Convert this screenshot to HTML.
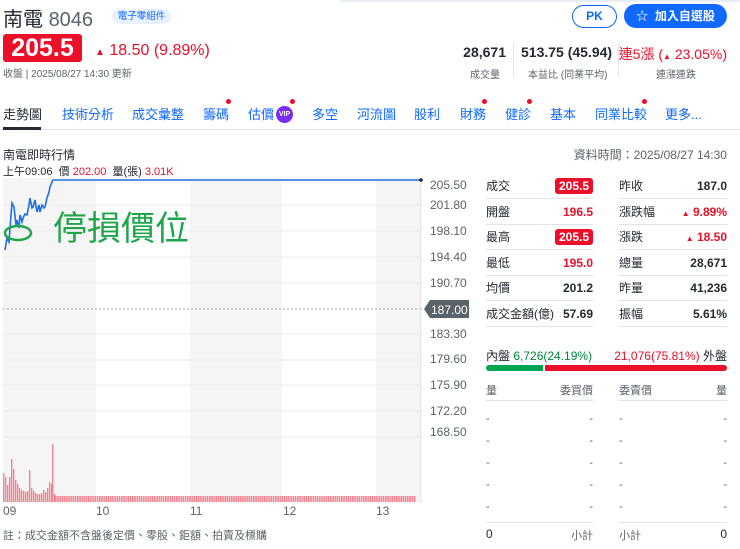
<!DOCTYPE html>
<html><head><meta charset="utf-8"><style>
*{margin:0;padding:0;box-sizing:border-box}
body{width:740px;height:549px;background:#fff;font-family:"Liberation Sans","Noto Sans CJK TC",sans-serif;position:relative;overflow:hidden;color:#232a31}
.a{position:absolute;white-space:nowrap}
.red{color:#eb0f29}.grn{color:#00873c}
.tab{position:absolute;top:104px;font-size:13px;color:#0f69ff}
.dot{position:absolute;width:5px;height:5px;border-radius:50%;background:#eb0f29}
.lbl{position:absolute;left:430px;font-size:12px;color:#5b636a}
.row{position:absolute;height:26px;border-bottom:1px solid #e0e4e9;font-size:12px;display:flex;justify-content:space-between;align-items:center}
.row b{font-weight:bold}
.box{background:#eb0f29;color:#fff;border-radius:3px;padding:1px 4px;font-weight:bold}
.ob{position:absolute;font-size:11px;color:#5b636a}
</style></head><body>
<div class="a" style="left:340px;top:0;width:400px;height:2px;background:#e8edf3"></div>
<div class="a" style="left:3px;top:3px;font-size:20px;color:#232a31">南電 <span style="color:#5b636a">8046</span></div>
<div class="a" style="left:112px;top:9px;width:59px;height:15px;background:#e8f1ff;border-radius:8px;font-size:9.5px;color:#0f69ff;text-align:center;line-height:15px">電子零組件</div>
<div class="a" style="left:3px;top:34px;width:79px;height:28px;background:#eb0f29;border-radius:3px;color:#fff;font-size:25px;font-weight:bold;text-align:center;line-height:28px">205.5</div>
<div class="a red" style="left:95px;top:42px;font-size:16px"><span style="font-size:10px">▲</span> 18.50 (9.89%)</div>
<div class="a" style="left:3px;top:65px;font-size:10px;color:#5b636a">收盤 | 2025/08/27 14:30 更新</div>

<div class="a" style="left:572px;top:5px;width:45px;height:23px;border:1.5px solid #0f69ff;border-radius:12px;color:#0f69ff;font-size:12px;font-weight:bold;text-align:center;line-height:20px">PK</div>
<div class="a" style="left:624px;top:4px;width:103px;height:24px;background:#0f69ff;border-radius:12px;color:#fff;font-size:12px;font-weight:bold;text-align:center;line-height:24px">☆&nbsp; 加入自選股</div>

<div class="a" style="right:234px;top:44px;font-size:14px;font-weight:bold">28,671</div>
<div class="a" style="right:240px;top:66px;font-size:10px;color:#5b636a">成交量</div>
<div class="a" style="left:513px;top:44px;width:1px;height:33px;background:#e0e4e9"></div>
<div class="a" style="left:521px;top:44px;font-size:14px;font-weight:bold">513.75 (45.94)</div>
<div class="a" style="left:528px;top:66px;font-size:10px;color:#5b636a">本益比 (同業平均)</div>
<div class="a" style="left:618px;top:44px;width:1px;height:33px;background:#e0e4e9"></div>
<div class="a red" style="right:13px;top:44px;font-size:14px">連5漲 (<span style="font-size:8px">▲</span> 23.05%)</div>
<div class="a" style="left:656px;top:66px;font-size:10px;color:#5b636a">連漲連跌</div>

<div class="a" style="left:0;top:129px;width:740px;height:1px;background:#e0e4e9"></div>
<div class="a" style="left:3px;top:127px;width:38px;height:3px;background:#232a31"></div>
<div class="tab" style="left:3px;color:#232a31">走勢圖</div>
<div class="tab" style="left:62px">技術分析</div>
<div class="tab" style="left:132px">成交彙整</div>
<div class="tab" style="left:203px">籌碼</div><div class="dot" style="left:226px;top:99px"></div>
<div class="tab" style="left:248px">估價</div>
<div class="a" style="left:276px;top:106px;width:17px;height:17px;border-radius:50%;background:#7a2cf0;color:#fff;font-size:7px;font-weight:bold;text-align:center;line-height:17px">VIP</div><div class="dot" style="left:290px;top:99px"></div>
<div class="tab" style="left:312px">多空</div>
<div class="tab" style="left:357px">河流圖</div>
<div class="tab" style="left:414px">股利</div>
<div class="tab" style="left:460px">財務</div><div class="dot" style="left:482px;top:99px"></div>
<div class="tab" style="left:505px">健診</div><div class="dot" style="left:527px;top:99px"></div>
<div class="tab" style="left:550px">基本</div>
<div class="tab" style="left:595px">同業比較</div><div class="dot" style="left:642px;top:99px"></div>
<div class="tab" style="left:665px">更多...</div>

<div class="a" style="left:3px;top:146px;font-size:12px">南電即時行情</div>
<div class="a" style="left:3px;top:163px;font-size:11px;color:#232a31">上午09:06 &nbsp;價 <span class="red">202.00</span> &nbsp;量(張) <span class="red">3.01K</span></div>
<div class="a" style="right:13px;top:146px;font-size:12px;color:#5b636a">資料時間：2025/08/27 14:30</div>

<svg class="a" style="left:0;top:175px" width="480" height="345" viewBox="0 175 480 345">
<rect x="3" y="178" width="93" height="325" fill="#f5f5f5"/>
<rect x="190" y="178" width="92" height="325" fill="#f5f5f5"/>
<rect x="376" y="178" width="45" height="325" fill="#f5f5f5"/>
<line x1="421" y1="178" x2="421" y2="503" stroke="#e0e0e0"/>
<g stroke="#ebebeb">
<line x1="3" y1="205" x2="421" y2="205"/><line x1="3" y1="231" x2="421" y2="231"/><line x1="3" y1="257" x2="421" y2="257"/><line x1="3" y1="283" x2="421" y2="283"/><line x1="3" y1="334" x2="421" y2="334"/><line x1="3" y1="360" x2="421" y2="360"/><line x1="3" y1="385" x2="421" y2="385"/><line x1="3" y1="411" x2="421" y2="411"/><line x1="3" y1="437" x2="421" y2="437"/>
</g>
<line x1="3" y1="309" x2="421" y2="309" stroke="#aaa" stroke-dasharray="2,2"/>
<polyline fill="none" stroke="#1e6fe0" stroke-width="1.6" points="5,250 7,238 9,242 11,215 12,203 14,207 16,225 17,220 19,228 20,215 22,222 23,218 25,214 27,215 29,205 30,198 32,208 33,207 35,200 37,212 39,205 40,212 42,205 44,208 45,207 47,198 49,192 50,187 52,182 53,180 420,180"/>
<circle cx="421" cy="180" r="1.8" fill="#222"/>
<ellipse cx="18" cy="233" rx="13" ry="7" fill="none" stroke="#1fa64a" stroke-width="2.5"/>
<path d="M424 309 L430 300 H469 V318 H430 Z" fill="#5b636a"/>
<text x="431" y="314" font-size="12" fill="#fff" font-family="Liberation Sans">187.00</text>
<defs><pattern id="p" width="2.2" height="10" patternUnits="userSpaceOnUse"><rect width="1.6" height="10" fill="#f2838f"/></pattern></defs>
<rect x="55" y="496" width="361" height="6" fill="url(#p)"/>
<g fill="#f2838f">
<rect x="3" y="473" width="1.4" height="29"/><rect x="5" y="477" width="1.4" height="25"/><rect x="7" y="485" width="1.4" height="17"/><rect x="9" y="477" width="1.4" height="25"/><rect x="11" y="459" width="1.4" height="43"/><rect x="13" y="469" width="1.4" height="33"/><rect x="15" y="480" width="1.4" height="22"/><rect x="17" y="484" width="1.4" height="18"/><rect x="19" y="488" width="1.4" height="14"/><rect x="21" y="490" width="1.4" height="12"/><rect x="23" y="491" width="1.4" height="11"/><rect x="25" y="492" width="1.4" height="10"/><rect x="27" y="491" width="1.4" height="11"/><rect x="29" y="470" width="1.4" height="32"/><rect x="31" y="488" width="1.4" height="14"/><rect x="33" y="491" width="1.4" height="11"/><rect x="35" y="493" width="1.4" height="9"/><rect x="37" y="494" width="1.4" height="8"/><rect x="39" y="494" width="1.4" height="8"/><rect x="41" y="493" width="1.4" height="9"/><rect x="43" y="490" width="1.4" height="12"/><rect x="45" y="492" width="1.4" height="10"/><rect x="47" y="488" width="1.4" height="14"/><rect x="49" y="482" width="1.4" height="20"/><rect x="51" y="484" width="1.4" height="18"/><rect x="52" y="444" width="1.4" height="58"/><rect x="54" y="494" width="1.4" height="8"/>
</g>
<g font-size="12" fill="#5b636a" font-family="Liberation Sans">
<text x="3" y="515">09</text><text x="96" y="515">10</text><text x="190" y="515">11</text><text x="283" y="515">12</text><text x="376" y="515">13</text>
</g>
</svg>
<div class="a" style="left:53px;top:209px;font-size:34px;color:#1fa64a;line-height:40px">停損價位</div>
<div class="lbl" style="top:178px">205.50</div>
<div class="lbl" style="top:198px">201.80</div>
<div class="lbl" style="top:224px">198.10</div>
<div class="lbl" style="top:250px">194.40</div>
<div class="lbl" style="top:276px">190.70</div>
<div class="lbl" style="top:327px">183.30</div>
<div class="lbl" style="top:352px">179.60</div>
<div class="lbl" style="top:378px">175.90</div>
<div class="lbl" style="top:404px">172.20</div>
<div class="lbl" style="top:425px">168.50</div>

<div class="row" style="left:486px;top:173px;width:107px"><span>成交</span><span class="box">205.5</span></div>
<div class="row" style="left:486px;top:199px;width:107px"><span>開盤</span><b class="red">196.5</b></div>
<div class="row" style="left:486px;top:224px;width:107px"><span>最高</span><span class="box">205.5</span></div>
<div class="row" style="left:486px;top:250px;width:107px"><span>最低</span><b class="red">195.0</b></div>
<div class="row" style="left:486px;top:275px;width:107px"><span>均價</span><b>201.2</b></div>
<div class="row" style="left:486px;top:301px;width:107px"><span>成交金額(億)</span><b>57.69</b></div>
<div class="row" style="left:619px;top:173px;width:108px"><span>昨收</span><b>187.0</b></div>
<div class="row" style="left:619px;top:199px;width:108px"><span>漲跌幅</span><b class="red"><span style="font-size:8px">▲</span> 9.89%</b></div>
<div class="row" style="left:619px;top:224px;width:108px"><span>漲跌</span><b class="red"><span style="font-size:8px">▲</span> 18.50</b></div>
<div class="row" style="left:619px;top:250px;width:108px"><span>總量</span><b>28,671</b></div>
<div class="row" style="left:619px;top:275px;width:108px"><span>昨量</span><b>41,236</b></div>
<div class="row" style="left:619px;top:301px;width:108px"><span>振幅</span><b>5.61%</b></div>

<div class="a" style="left:486px;top:347px;font-size:12px">內盤 <span class="grn">6,726(24.19%)</span></div>
<div class="a" style="right:13px;top:347px;font-size:12px"><span class="red">21,076(75.81%)</span> 外盤</div>
<div class="a" style="left:486px;top:365px;width:57px;height:6px;background:#00a651;border-radius:3px 0 0 3px"></div>
<div class="a" style="left:545px;top:365px;width:182px;height:6px;background:#eb0f29;border-radius:0 3px 3px 0"></div>

<div class="ob" style="left:486px;top:382px;width:107px;height:19px;border-bottom:1px solid #e0e4e9">量<span style="float:right">委買價</span></div>
<div class="ob" style="left:619px;top:382px;width:108px;height:19px;border-bottom:1px solid #e0e4e9">委賣價<span style="float:right">量</span></div>
<div class="ob" style="left:486px;top:408px;width:107px;line-height:22px">-<span style="float:right">-</span><br>-<span style="float:right">-</span><br>-<span style="float:right">-</span><br>-<span style="float:right">-</span><br>-<span style="float:right">-</span></div>
<div class="ob" style="left:619px;top:408px;width:108px;line-height:22px">-<span style="float:right">-</span><br>-<span style="float:right">-</span><br>-<span style="float:right">-</span><br>-<span style="float:right">-</span><br>-<span style="float:right">-</span></div>
<div class="a" style="left:486px;top:522px;width:107px;height:1px;background:#e0e4e9"></div>
<div class="a" style="left:619px;top:522px;width:108px;height:1px;background:#e0e4e9"></div>
<div class="ob" style="left:486px;top:527px;width:107px"><span style="color:#232a31;font-size:12px">0</span><span style="float:right">小計</span></div>
<div class="ob" style="left:619px;top:527px;width:108px">小計<span style="float:right;color:#232a31;font-size:12px">0</span></div>

<div class="a" style="left:3px;top:527px;font-size:11px;color:#5b636a">註：成交金額不含盤後定價、零股、鉅額、拍賣及標購</div>
</body></html>
